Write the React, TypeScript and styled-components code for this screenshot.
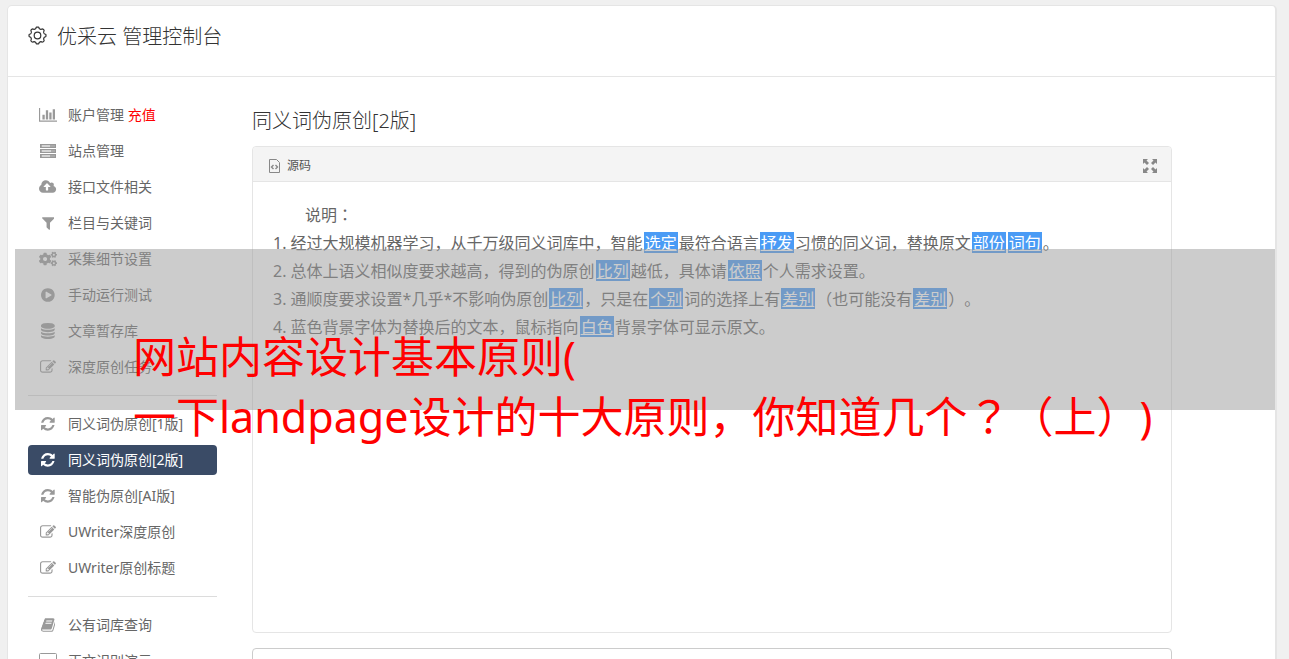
import React from "react";
import styled, { createGlobalStyle } from "styled-components";
import { FaCogs } from "react-icons/fa";

const GlobalStyle = createGlobalStyle`
  * { box-sizing: border-box; }
  body {
    margin: 0;
    background: #f0f0f0;
    color: #666;
    font-family: "Noto Sans", "Noto Sans CJK SC", sans-serif;
    font-weight: 400;
    font-size: 14px;
    text-spacing-trim: space-all;
  }
`;

const Page = styled.div`
  position: relative;
  height: 100vh;
  overflow: hidden;
  padding: 5px 12px 0 7px;
`;

const Card = styled.main`
  min-height: 100vh;
  background: #fff;
  border: 1px solid #e5e5e5;
  border-right-width: 2px;
  border-radius: 5px 5px 0 0;
`;

const Header = styled.header`
  display: flex;
  align-items: flex-start;
  gap: 10px;
  height: 71px;
  padding: 16px 20px 0;
  border-bottom: 1px solid #e5e5e5;
  color: #333;

  svg { margin-top: 4px; }
`;

const AppTitle = styled.h1`
  margin: 0;
  font-size: 20px;
  font-weight: 300;
  line-height: 30px;
`;

const Columns = styled.div`
  display: flex;
  gap: 35px;
  padding: 23px 103px 0 20px;
`;

const Sidebar = styled.nav`
  flex: 0 0 189px;
`;

const Menu = styled.ul`
  display: flex;
  flex-direction: column;
  gap: 6px;
  margin: 0;
  padding: 0;
  list-style: none;

  & + & {
    margin-top: 13px;
    padding-top: 13px;
    border-top: 1px solid #dcdcdc;
  }
`;

const MenuLink = styled.a<{ $active?: boolean }>`
  display: flex;
  align-items: center;
  gap: 10px;
  height: 30px;
  padding: 0 10px;
  border-radius: 4px;
  color: ${(p) => (p.$active ? "#fff" : "#666")};
  background: ${(p) => (p.$active ? "#3a4b66" : "transparent")};
  line-height: 20px;
  text-decoration: none;
  white-space: nowrap;

  svg { color: ${(p) => (p.$active ? "#fff" : "#999")}; }
`;

const IconSlot = styled.span`
  display: flex;
  flex: 0 0 20px;
  justify-content: center;
`;

const Recharge = styled.span`
  color: #f00;
`;

const Content = styled.section`
  flex: 1;
  min-width: 0;
`;

const SectionTitle = styled.h2`
  margin: 6px 0 10px;
  color: #333;
  font-size: 20px;
  font-weight: 300;
  line-height: 30px;
`;

const Panel = styled.div`
  min-height: 487px;
  margin-bottom: 15px;
  border: 1px solid #e5e5e5;
  border-radius: 4px;
`;

const Toolbar = styled.div`
  display: flex;
  align-items: center;
  justify-content: space-between;
  height: 35px;
  padding: 3px 14px 0 15px;
  background: #f4f4f4;
  border-bottom: 1px solid #e5e5e5;
  border-radius: 4px 4px 0 0;
`;

const ToolButton = styled.button`
  display: flex;
  align-items: center;
  gap: 6px;
  padding: 0;
  border: 0;
  background: none;
  color: #555;
  font: inherit;
  font-size: 12px;
  line-height: 18px;
`;

const Document = styled.div`
  padding: 19px 20px;
  font-size: 16px;
  line-height: 28px;
`;

const Lead = styled.p`
  margin: 0;
  text-indent: 32px;
`;

const Notes = styled.ol`
  margin: 0;
  padding: 0;
  list-style: none;
  counter-reset: note;

  li { counter-increment: note; }
  li::before { content: counter(note) ". "; }
`;

const Swap = styled.span`
  display: inline-block;
  height: 21px;
  margin: 0 1px;
  padding: 0 1px;
  background: #4a9bf5;
  color: #fff;
  line-height: 22px;
  text-decoration: underline;
`;

const CenteredMark = styled.span`
  font-family: "Noto Sans CJK JP", sans-serif;
  line-height: 1;
`;

const Output = styled.textarea`
  display: block;
  width: 100%;
  height: 120px;
  border: 1px solid #ccc;
  border-radius: 4px;
  resize: none;
`;

const Banner = styled.div`
  position: absolute;
  top: 249px;
  left: 15px;
  right: 14px;
  height: 161px;
  padding: 78px 0 0 118px;
  background: rgba(153, 153, 153, 0.5);
  color: #f00;
  font-size: 43px;
  line-height: 60px;
  white-space: nowrap;
`;

const BannerLine = styled.div``;

type Glyph = { w: number; h: number; d: string };

const glyphs: Record<string, Glyph> = {
  chart: { w: 2048, h: 1536, d: "M640 768v512h-256v-512h256zM1024 256v1024h-256v-1024h256zM2048 1408v128h-2048v-1536h128v1408h1920zM1408 512v768h-256v-768h256zM1792 128v1152h-256v-1152h256z" },
  upload: { w: 1920, h: 1792, d: "M1280 864q0-14-9-23l-352-352q-9-9-23-9t-23 9l-351 351q-10 12-10 24 0 14 9 23t23 9h224v352q0 13 9.500 22.500t22.500 9.500h192q13 0 22.500-9.500t9.500-22.500v-352h224q13 0 22.500-9.500t9.500-22.500zM1920 1152q0 159-112.500 271.500t-271.500 112.500h-1088q-185 0-316.500-131.500t-131.500-316.500q0-130 70-240t188-165q-2-30-2-43 0-212 150-362t362-150q156 0 285.500 87t188.500 231q71-62 166-62 106 0 181 75t75 181q0 76-41 138 130 31 213.500 135.500t83.500 238.500z" },
  filter: { w: 1408, h: 1792, d: "M1403 295q17 41-14 70l-493 493v742q0 42-39 59-13 5-25 5-27 0-45-19l-256-256q-19-19-19-45v-486l-493-493q-31-29-14-70 17-39 59-39h1280q42 0 59 39z" },
  play: { w: 1536, h: 1792, d: "M768 128q209 0 385.500 103t279.500 279.500 103 385.500-103 385.500-279.500 279.500-385.500 103-385.500-103-279.500-279.500-103-385.500 103-385.500 279.500-279.500 385.500-103zM1152 951q32-18 32-55t-32-55l-544-320q-31-19-64-1-32 19-32 56v640q0 37 32 56 16 8 32 8 17 0 32-9z" },
  database: { w: 1536, h: 1792, d: "M768 768q237 0 443-43t325-127v170q0 69-103 128t-280 93.500-385 34.500-385-34.500-280-93.500-103-128v-170q119 84 325 127t443 43zM768 1536q237 0 443-43t325-127v170q0 69-103 128t-280 93.500-385 34.500-385-34.500-280-93.500-103-128v-170q119 84 325 127t443 43zM768 1152q237 0 443-43t325-127v170q0 69-103 128t-280 93.500-385 34.500-385-34.500-280-93.500-103-128v-170q119 84 325 127t443 43zM768 0q208 0 385 34.500t280 93.500 103 128v128q0 69-103 128t-280 93.500-385 34.500-385-34.500-280-93.500-103-128v-128q0-69 103-128t280-93.500 385-34.500z" },
  edit: { w: 1792, h: 1792, d: "M888 1184l116-116-152-152-116 116v56h96v96h56zM1328 464q-16-16-33 1l-350 350q-17 17-1 33t33-1l350-350q17-17 1-33zM1408 1058v190q0 119-84.500 203.500t-203.500 84.500h-832q-119 0-203.500-84.500t-84.500-203.500v-832q0-119 84.500-203.500t203.500-84.500h832q63 0 117 25 15 7 18 23 3 17-9 29l-49 49q-14 14-32 8-23-6-45-6h-832q-66 0-113 47t-47 113v832q0 66 47 113t113 47h832q66 0 113-47t47-113v-126q0-13 9-22l64-64q15-15 35-7t20 29zM1312 320l288 288-672 672h-288v-288zM1756 452l-92 92-288-288 92-92q28-28 68-28t68 28l152 152q28 28 28 68t-28 68z" },
  refresh: { w: 1536, h: 1536, d: "M1511 928q0 5-1 7-64 268-268 434.500t-478 166.500q-146 0-282.500-55t-243.500-157l-129 129q-19 19-45 19t-45-19-19-45v-448q0-26 19-45t45-19h448q26 0 45 19t19 45-19 45l-137 137q71 66 161 102t187 36q134 0 250-65t186-179q11-17 53-117 8-23 30-23h192q13 0 22.500 9.500t9.500 22.500zM1536 128v448q0 26-19 45t-45 19h-448q-26 0-45-19t-19-45 19-45l138-138q-148-137-349-137-134 0-250 65t-186 179q-11 17-53 117-8 23-30 23h-199q-13 0-22.500-9.500t-9.500-22.500v-7q65-268 270-434.500t480-166.500q146 0 284 55.500t245 156.500l130-129q19-19 45-19t45 19 19 45z" },
  book: { w: 1664, h: 1792, d: "M1639 478q40 57 18 129l-275 906q-19 64-76.500 107.500t-122.500 43.500h-923q-77 0-148.500-53.500t-99.500-131.500q-24-67-2-127 0-4 3-27t4-37q1-8-3-21.500t-3-19.500q2-11 8-21t16.500-23.500 16.500-23.500q23-38 45-91.500t30-91.500q3-10 0.500-30t-0.500-28q3-11 17-28t17-23q21-36 42-92t25-90q1-9-2.500-32t0.500-28q4-13 22-30.500t22-22.500q19-26 42.500-84.500t27.500-96.500q1-8-3-25.500t-2-26.500q2-8 9-18t18-23 17-21q8-12 16.500-30.500t15-35 16-36 19.500-32 26.500-23.500 36-11.500 47.500 5.500l-1 3q38-9 51-9h761q74 0 114 56t18 130l-274 906q-36 119-71.500 153.500t-128.500 34.500h-869q-27 0-38 15-11 16-1 43 24 70 144 70h923q29 0 56-15.500t35-41.500l300-987q7-22 5-57 38 15 59 43zM575 480q-4 13 2 22.500t20 9.500h608q13 0 25.500-9.500t16.500-22.500l21-64q4-13-2-22.500t-20-9.500h-608q-13 0-25.500 9.500t-16.500 22.500zM492 736q-4 13 2 22.500t20 9.500h608q13 0 25.500-9.500t16.500-22.500l21-64q4-13-2-22.500t-20-9.500h-608q-13 0-25.500 9.500t-16.500 22.500z" },
};

const GlyphIcon = ({ name }: { name: string }) => {
  const g = glyphs[name];
  return (
    <svg width={(g.w * 16) / 1792} height={(g.h * 16) / 1792} viewBox={`0 0 ${g.w} ${g.h}`} fill="currentColor" aria-hidden="true">
      <path d={g.d} />
    </svg>
  );
};

const ServerIcon = () => (
  <svg width="18" height="14" viewBox="0 0 18 14" aria-hidden="true">
    <g fill="#aaa" stroke="currentColor">
      <rect x="1.5" y="0.500" width="15" height="3" />
      <rect x="1.5" y="5.500" width="15" height="3" />
      <rect x="1.5" y="10.500" width="15" height="3" />
    </g>
    <path d="M3 2h8M3 7h9M3 12h8" stroke="#fff" />
  </svg>
);

const LaptopIcon = () => (
  <svg width="18" height="16" viewBox="0 0 18 16" fill="none" stroke="currentColor" aria-hidden="true">
    <rect x="0.500" y="0.500" width="17" height="12" rx="1" />
    <path d="M5 15h8" strokeWidth="2" />
  </svg>
);

const gearPath = (() => {
  const pts: string[] = [];
  for (let i = 0; i <= 120; i++) {
    const a = (i / 120) * Math.PI * 2;
    const r = 7.7 + 0.8 * Math.tanh(2 * Math.cos(8 * a));
    pts.push(`${(9.5 + r * Math.sin(a)).toFixed(2)} ${(9.5 - r * Math.cos(a)).toFixed(2)}`);
  }
  return `M${pts.join("L")}z`;
})();

const GearIcon = () => (
  <svg width="19" height="19" viewBox="0 0 19 19" fill="none" stroke="#333" strokeWidth="1.2" aria-hidden="true">
    <path d={gearPath} />
    <circle cx="9.5" cy="9.5" r="3.3" />
  </svg>
);

const SourceIcon = () => (
  <svg width="13" height="16" viewBox="0 0 13 16" fill="none" stroke="#888" aria-hidden="true">
    <path d="M1.500 1.500h7l3 3v10h-10z" />
    <path d="M5.500 7L3.500 9l2 2M7.500 7l2 2-2 2" strokeWidth="1.400" />
  </svg>
);

const ExpandIcon = () => (
  <svg width="14" height="14" viewBox="0 0 14 14" fill="#888" aria-hidden="true">
    <path d="M0 0h5L3.500 1.500 6 4 4 6 1.500 3.500 0 5zM14 0v5l-1.500-1.500L10 6 8 4l2.500-2.500L9 0zM0 14V9l1.500 1.500L4 8l2 2-2.500 2.500L5 14zM14 14H9l1.500-1.500L8 10l2-2 2.500 2.500L14 9z" />
  </svg>
);

type Item = { label: string; icon: React.ReactNode; note?: string; active?: boolean };

const menus: Item[][] = [
  [
    { label: "账户管理", note: "充值", icon: <GlyphIcon name="chart" /> },
    { label: "站点管理", icon: <ServerIcon /> },
    { label: "接口文件相关", icon: <GlyphIcon name="upload" /> },
    { label: "栏目与关键词", icon: <GlyphIcon name="filter" /> },
    { label: "采集细节设置", icon: <FaCogs size={18} /> },
    { label: "手动运行测试", icon: <GlyphIcon name="play" /> },
    { label: "文章暂存库", icon: <GlyphIcon name="database" /> },
    { label: "深度原创任务", icon: <GlyphIcon name="edit" /> },
  ],
  [
    { label: "同义词伪原创[1版]", icon: <GlyphIcon name="refresh" /> },
    { label: "同义词伪原创[2版]", icon: <GlyphIcon name="refresh" />, active: true },
    { label: "智能伪原创[AI版]", icon: <GlyphIcon name="refresh" /> },
    { label: "UWriter深度原创", icon: <GlyphIcon name="edit" /> },
    { label: "UWriter原创标题", icon: <GlyphIcon name="edit" /> },
  ],
  [
    { label: "公有词库查询", icon: <GlyphIcon name="book" /> },
    { label: "正文识别演示", icon: <LaptopIcon /> },
  ],
];

export default function App() {
  return (
    <Page lang="zh-CN">
      <GlobalStyle />
      <Card>
        <Header>
          <GearIcon />
          <AppTitle>优采云 管理控制台</AppTitle>
        </Header>
        <Columns>
          <Sidebar>
            {menus.map((menu, i) => (
              <Menu key={i}>
                {menu.map((item) => (
                  <li key={item.label}>
                    <MenuLink href="#" $active={item.active}>
                      <IconSlot>{item.icon}</IconSlot>
                      <span>
                        {item.label}
                        {item.note && <Recharge> {item.note}</Recharge>}
                      </span>
                    </MenuLink>
                  </li>
                ))}
              </Menu>
            ))}
          </Sidebar>
          <Content>
            <SectionTitle>同义词伪原创[2版]</SectionTitle>
            <Panel>
              <Toolbar>
                <ToolButton type="button"><SourceIcon />源码</ToolButton>
                <ToolButton type="button" aria-label="全屏"><ExpandIcon /></ToolButton>
              </Toolbar>
              <Document>
                <Lead>说明<CenteredMark lang="ja">：</CenteredMark></Lead>
                <Notes>
                  <li>经过大规模机器学习，从千万级同义词库中，智能<Swap>选定</Swap>最符合语言<Swap>抒发</Swap>习惯的同义词，替换原文<Swap>部份</Swap><Swap>词句</Swap>。</li>
                  <li>总体上语义相似度要求越高，得到的伪原创<Swap>比列</Swap>越低，具体请<Swap>依照</Swap>个人需求设置。</li>
                  <li>通顺度要求设置*几乎*不影响伪原创<Swap>比列</Swap>，只是在<Swap>个别</Swap>词的选择上有<Swap>差别</Swap>（也可能没有<Swap>差别</Swap>）。</li>
                  <li>蓝色背景字体为替换后的文本，鼠标指向<Swap>白色</Swap>背景字体可显示原文。</li>
                </Notes>
              </Document>
            </Panel>
            <Output aria-label="输出" />
          </Content>
        </Columns>
      </Card>
      <Banner>
        <BannerLine>网站内容设计基本原则(</BannerLine>
        <BannerLine>一下landpage设计的十大原则，你知道几个<CenteredMark lang="ja">？</CenteredMark>（上）)</BannerLine>
      </Banner>
    </Page>
  );
}
